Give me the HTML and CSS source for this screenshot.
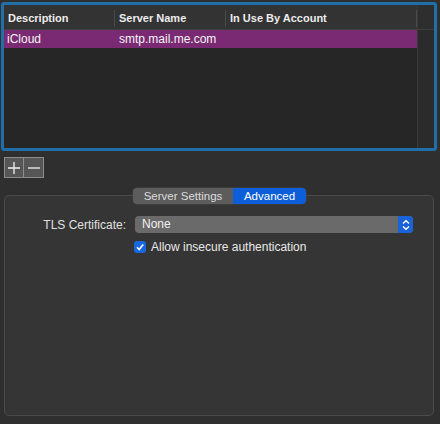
FILE: index.html
```html
<!DOCTYPE html>
<html lang="en">
<head>
<meta charset="UTF-8">
<title>SMTP Servers</title>
<link rel="stylesheet" href="styles.css">
</head>
<body>
<div class="server-list">
    <div class="list-main">
        <div class="list-head">
            <div class="col col-desc">Description</div>
            <div class="col col-server">Server Name</div>
            <div class="col col-account">In Use By Account</div>
        </div>
        <div class="list-row selected">
            <div class="col col-desc">iCloud</div>
            <div class="col col-server">smtp.mail.me.com</div>
            <div class="col col-account"></div>
        </div>
    </div>
    <div class="list-scroll">
        <div class="scroll-head"></div>
    </div>
</div>

<div class="list-buttons">
    <button class="sq-btn" type="button">
        <svg width="14" height="14" viewBox="0 0 14 14"><path d="M7 1v12M1 7h12" stroke="#f2f2f2" stroke-width="1.3"/></svg>
    </button>
    <button class="sq-btn" type="button">
        <svg width="14" height="14" viewBox="0 0 14 14"><path d="M1 7h12" stroke="#f2f2f2" stroke-width="1.3"/></svg>
    </button>
</div>

<div class="tab-box">
    <div class="segments">
        <div class="segment">Server Settings</div>
        <div class="segment active">Advanced</div>
    </div>
    <div class="form">
        <label class="form-label">TLS Certificate:</label>
        <div class="popup">
            <span>None</span>
            <span class="popup-arrows">
                <svg width="10" height="12" viewBox="0 0 10 12"><path d="M2 4.5L5 1.8 8 4.5M2 7.5L5 10.2 8 7.5" fill="none" stroke="#fff" stroke-width="1.4"/></svg>
            </span>
        </div>
        <div></div>
        <div class="check-row">
            <span class="checkbox">
                <svg width="10" height="10" viewBox="0 0 10 10"><path d="M2 5.2L4.2 7.6 8.2 2.4" fill="none" stroke="#fff" stroke-width="1.6"/></svg>
            </span>
            <span>Allow insecure authentication</span>
        </div>
    </div>
</div>
</body>
</html>
```

FILE: styles.css
```css
body {
    margin: 0;
    width: 440px;
    height: 424px;
    background-color: #2f2f2f;
    font-family: "Liberation Sans", Arial, sans-serif;
    font-size: 12px;
    color: #e8e8e8;
    overflow: hidden;
}

.server-list {
    display: flex;
    height: 143px;
    margin: 2px 3px 0 1px;
    border: 3px solid #216ea9;
    border-radius: 3px;
    background-color: #262626;
}

.list-main {
    flex: 1;
}

.list-head {
    display: flex;
    height: 25px;
    padding-top: 2px;
    box-sizing: border-box;
    align-items: center;
    background-color: #333333;
    border-bottom: 1px solid #3f3f3f;
    font-size: 11px;
    font-weight: bold;
    color: #ececec;
}

.list-head .col {
    height: 17px;
    line-height: 17px;
}

.list-head .col + .col {
    border-left: 1px solid #4a4a4a;
}

.col {
    padding-left: 4px;
    box-sizing: border-box;
    white-space: nowrap;
}

.col-desc {
    width: 110px;
}

.col-server {
    width: 111px;
}

.col-account {
    flex: 1;
    border-right: 1px solid #4a4a4a;
}

.list-row {
    display: flex;
    height: 18px;
    line-height: 18px;
}

.list-row .col {
    border: none;
}

.list-row .col-desc {
    padding-left: 3px;
}

.list-row .col-server {
    padding-left: 5px;
}

.selected {
    background-color: #7a2a73;
    color: #f4f4f4;
}

.list-scroll {
    width: 16px;
    background-color: #2b2b2b;
    border-left: 1px solid #3a3a3a;
}

.scroll-head {
    height: 24px;
    background-color: #2e2e2e;
    border-bottom: 1px solid #3f3f3f;
}

.list-buttons {
    display: flex;
    margin: 6px 0 0 4px;
}

.sq-btn {
    width: 20px;
    height: 21px;
    padding: 0;
    display: flex;
    align-items: center;
    justify-content: center;
    background-color: #565656;
    border: 1px solid #8c8c8c;
}

.sq-btn + .sq-btn {
    border-left: none;
}

.tab-box {
    display: flex;
    flex-direction: column;
    align-items: center;
    height: 219px;
    margin: 17px 6px 0 4px;
    border: 1px solid #4a4a4a;
    border-radius: 5px;
    background-color: #353535;
}

.segments {
    display: flex;
    margin-top: -8px;
    margin-left: 1px;
    height: 16px;
    border-radius: 4px;
    overflow: hidden;
    font-size: 11.5px;
    line-height: 16px;
    box-shadow: 0 0 0 0.5px #444;
}

.segment {
    width: 100px;
    text-align: center;
    background-color: #5c5c5c;
    color: #dcdcdc;
}

.segment.active {
    width: 73px;
    background-color: #0c5fd8;
    color: #ffffff;
}

.form {
    align-self: stretch;
    display: grid;
    grid-template-columns: 121px 278px;
    column-gap: 9px;
    row-gap: 7px;
    margin-top: 12px;
    align-items: center;
}

.form-label {
    text-align: right;
    color: #e0e0e0;
}

.popup {
    display: flex;
    justify-content: space-between;
    height: 17px;
    line-height: 17px;
    border-radius: 4px;
    background-color: #6a6a6a;
    color: #f0f0f0;
    overflow: hidden;
}

.popup span:first-child {
    padding-left: 7px;
}

.popup-arrows {
    width: 15px;
    display: flex;
    align-items: center;
    justify-content: center;
    background-color: #1a62d8;
}

.check-row {
    display: flex;
    align-items: center;
    gap: 5px;
    margin-left: -1px;
}

.checkbox {
    width: 12px;
    height: 12px;
    display: flex;
    align-items: center;
    justify-content: center;
    border-radius: 3px;
    background-color: #1767de;
}
```
